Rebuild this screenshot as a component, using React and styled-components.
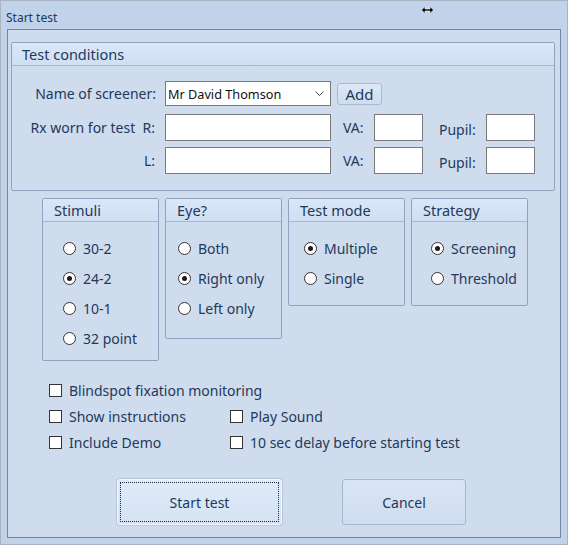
import React from "react";
import styled, { createGlobalStyle } from "styled-components";

const GlobalStyle = createGlobalStyle`
  html, body {
    margin: 0;
    padding: 0;
    background: #c0d3ea;
  }
  * {
    box-sizing: border-box;
  }
`;

const textColor = "#1e395b";

const Window = styled.div`
  position: relative;
  width: 568px;
  height: 545px;
  border: 1px solid #a9b3c2;
  background: #c0d3ea;
  display: flex;
  flex-direction: column;
  font-family: "Noto Sans", "Open Sans", sans-serif;
  font-size: 14px;
  color: ${textColor};
`;

const TitleBar = styled.div`
  height: 28px;
  padding: 4px 0 0 5px;
  display: flex;
  align-items: center;
  font-size: 12px;
`;

const Cursor = styled.svg`
  position: absolute;
  left: 420px;
  top: 5px;
`;

const Client = styled.div`
  flex: 1;
  margin: 0 6px 6px;
  border: 1px solid #7086a3;
  background: #cfdcee;
  display: flex;
  flex-direction: column;
`;

const Group = styled.div`
  width: ${(p) => p.$width}px;
  height: ${(p) => p.$height}px;
  border: 1px solid #8fa3c0;
  border-radius: 2px;
  display: flex;
  flex-direction: column;
`;

const GroupHeader = styled.div`
  height: 23px;
  border-bottom: 1px solid #a6b8d2;
  background: linear-gradient(#d9e7f8, #cfdff2);
  padding-left: ${(p) => p.$indent}px;
  font-size: 14.5px;
  line-height: 22px;
`;

const ConditionsBody = styled.div`
  padding: 15px 0 0 0;
  display: flex;
  flex-direction: column;
`;

const Row = styled.div`
  display: flex;
  align-items: center;
  margin-top: ${(p) => p.$top || 0}px;
`;

const FieldLabel = styled.div`
  width: ${(p) => p.$width}px;
  padding-left: ${(p) => p.$pad || 0}px;
  padding-right: ${(p) => p.$padRight || 0}px;
  text-align: ${(p) => p.$align || "left"};
  white-space: pre;
  margin-top: ${(p) => p.$shift || 0}px;
`;

const TextBox = styled.div`
  width: ${(p) => p.$width}px;
  height: 27px;
  background: #fff;
  border: 1px solid #7a7a7a;
`;

const Select = styled.div`
  width: 166px;
  height: 25px;
  margin-left: 8px;
  background: #fff;
  border: 1px solid #7a7a7a;
  display: flex;
  align-items: center;
  justify-content: space-between;
  padding: 0 6px 0 2px;
  font-size: 12.7px;
  color: #111;
`;

const AddButton = styled.div`
  width: 45px;
  height: 22px;
  margin-left: 6px;
  border: 1px solid #a9bbd3;
  border-radius: 3px;
  background: linear-gradient(#dde8f6, #cfdcee);
  display: flex;
  align-items: center;
  justify-content: center;
  font-size: 15px;
`;

const SubGroups = styled.div`
  display: flex;
  align-items: flex-start;
  gap: 6px;
  margin: 7px 0 0 34px;
`;

const OptionList = styled.div`
  padding: 11px 0 0 ${(p) => p.$indent}px;
  display: flex;
  flex-direction: column;
`;

const Option = styled.div`
  height: 30px;
  display: flex;
  align-items: center;
  gap: 7px;
`;

const RadioDot = styled.span`
  width: 13px;
  height: 13px;
  border-radius: 50%;
  border: 1px solid #333;
  background: #fff;
  display: flex;
  align-items: center;
  justify-content: center;
  &::after {
    content: "";
    width: 5px;
    height: 5px;
    border-radius: 50%;
    background: ${(p) => (p.$checked ? "#1a1a1a" : "transparent")};
  }
`;

const Checks = styled.div`
  display: grid;
  grid-template-columns: 181px auto;
  grid-auto-rows: 26px;
  margin: 16px 0 0 41px;
`;

const CheckItem = styled.div`
  display: flex;
  align-items: center;
  gap: 7px;
  grid-column: ${(p) => (p.$wide ? "1 / 3" : "auto")};
`;

const CheckBox = styled.span`
  width: 13px;
  height: 13px;
  border: 1px solid #333;
  background: #fff;
`;

const Buttons = styled.div`
  display: flex;
  gap: 60px;
  margin: 24px 0 0 109px;
`;

const DialogButton = styled.div`
  position: relative;
  width: ${(p) => p.$width}px;
  height: 46px;
  border: 1px solid ${(p) => (p.$focused ? "#f4f8fc" : "#a6b8d0")};
  border-radius: 3px;
  background: ${(p) =>
    p.$focused
      ? "linear-gradient(#e0ebf8, #d4e2f3)"
      : "linear-gradient(#d9e5f4, #d0ddef)"};
  box-shadow: ${(p) => (p.$focused ? "0 0 0 1px #b5c5da" : "none")};
  display: flex;
  align-items: center;
  justify-content: center;
  &::before {
    content: "";
    display: ${(p) => (p.$focused ? "block" : "none")};
    position: absolute;
    inset: 2px;
    border: 1px dotted #1a2a40;
  }
`;

const stimuli = [
  { label: "30-2" },
  { label: "24-2", checked: true },
  { label: "10-1" },
  { label: "32 point" },
];
const eyes = [
  { label: "Both" },
  { label: "Right only", checked: true },
  { label: "Left only" },
];
const modes = [{ label: "Multiple", checked: true }, { label: "Single" }];
const strategies = [{ label: "Screening", checked: true }, { label: "Threshold" }];

function RadioGroup({ title, height, indent, options }) {
  return (
    <Group $width={117} $height={height}>
      <GroupHeader $indent={11}>{title}</GroupHeader>
      <OptionList $indent={indent}>
        {options.map((o) => (
          <Option key={o.label}>
            <RadioDot $checked={o.checked} />
            {o.label}
          </Option>
        ))}
      </OptionList>
    </Group>
  );
}

function Chevron() {
  return (
    <svg width="9" height="6" viewBox="0 0 9 6">
      <path d="M0.5 0.5 L4.5 4.5 L8.5 0.5" fill="none" stroke="#444" strokeWidth="1" />
    </svg>
  );
}

function EyeRow({ side }) {
  return (
    <>
      <TextBox $width={166} />
      <FieldLabel $width={43} $pad={12}>
        VA:
      </FieldLabel>
      <TextBox $width={49} />
      <FieldLabel $width={63} $pad={16} $shift={4}>
        Pupil:
      </FieldLabel>
      <TextBox $width={49} data-side={side} />
    </>
  );
}

export default function App() {
  return (
    <>
      <GlobalStyle />
      <Window>
        <TitleBar>Start test</TitleBar>
        <Cursor width="13" height="8" viewBox="0 0 13 8">
          <path
            d="M0.5 4 L4 0.5 L4 3 L9 3 L9 0.5 L12.5 4 L9 7.5 L9 5 L4 5 L4 7.5 Z"
            fill="#000"
            stroke="#fff"
            strokeWidth="0.6"
          />
        </Cursor>
        <Client>
          <Group $width={544} $height={149} style={{ margin: "12px 0 0 3px" }}>
            <GroupHeader $indent={10}>Test conditions</GroupHeader>
            <ConditionsBody>
              <Row>
                <FieldLabel $width={145} $align="right" $padRight={1}>
                  Name of screener:
                </FieldLabel>
                <Select>
                  Mr David Thomson
                  <Chevron />
                </Select>
                <AddButton>Add</AddButton>
              </Row>
              <Row $top={8}>
                <FieldLabel $width={153} $align="right" $padRight={10}>
                  {"Rx worn for test  R:"}
                </FieldLabel>
                <EyeRow side="R" />
              </Row>
              <Row $top={6}>
                <FieldLabel $width={153} $align="right" $padRight={10}>
                  L:
                </FieldLabel>
                <EyeRow side="L" />
              </Row>
            </ConditionsBody>
          </Group>

          <SubGroups>
            <RadioGroup title="Stimuli" height={163} indent={20} options={stimuli} />
            <RadioGroup title="Eye?" height={141} indent={12} options={eyes} />
            <RadioGroup title="Test mode" height={108} indent={15} options={modes} />
            <RadioGroup title="Strategy" height={108} indent={19} options={strategies} />
          </SubGroups>

          <Checks>
            <CheckItem $wide>
              <CheckBox />
              Blindspot fixation monitoring
            </CheckItem>
            <CheckItem>
              <CheckBox />
              Show instructions
            </CheckItem>
            <CheckItem>
              <CheckBox />
              Play Sound
            </CheckItem>
            <CheckItem>
              <CheckBox />
              Include Demo
            </CheckItem>
            <CheckItem>
              <CheckBox />
              10 sec delay before starting test
            </CheckItem>
          </Checks>

          <Buttons>
            <DialogButton $width={165} $focused>
              Start test
            </DialogButton>
            <DialogButton $width={124}>Cancel</DialogButton>
          </Buttons>
        </Client>
      </Window>
    </>
  );
}
